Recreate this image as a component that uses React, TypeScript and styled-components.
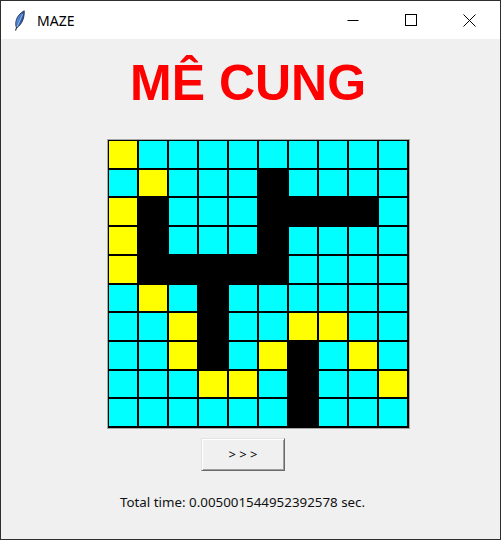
import React from "react";
import styled, { createGlobalStyle } from "styled-components";

const GlobalStyle = createGlobalStyle`
  html, body { margin: 0; padding: 0; background: #f0f0f0; }
  * { box-sizing: border-box; }
`;

const Window = styled.div`
  width: 501px;
  height: 540px;
  border: 1px solid #2e2e2e;
  background: #f0f0f0;
  display: flex;
  flex-direction: column;
  overflow: hidden;
`;

const TitleBar = styled.div`
  height: 38px;
  flex: 0 0 38px;
  background: #ffffff;
  display: flex;
  align-items: center;
`;

const AppIcon = styled.svg`
  width: 11px;
  height: 21px;
  margin-left: 13px;
  flex: 0 0 auto;
`;

const TitleText = styled.span`
  margin-left: 12px;
  font-family: "Noto Sans", "Segoe UI", sans-serif;
  font-size: 14px;
  color: #000;
  flex: 1;
`;

const Controls = styled.div`
  display: flex;
  height: 100%;
  margin-right: 2px;
`;

const ControlButton = styled.div`
  width: 58px;
  height: 100%;
  display: flex;
  align-items: center;
  justify-content: center;
`;

const Content = styled.div`
  flex: 1;
  display: flex;
  flex-direction: column;
  align-items: flex-start;
`;

const Heading = styled.h1`
  margin: 20px 0 0 129px;
  font-family: "Liberation Sans", Arial, sans-serif;
  font-weight: bold;
  font-size: 50px;
  line-height: 49px;
  color: #ff0000;
  white-space: nowrap;
`;

const MazeFrame = styled.div`
  margin: 31px 0 0 106px;
  width: 303px;
  height: 290px;
  border: 1px solid #a8a8a8;
  background: #000;
  padding: 1px 2px 2px 1px;
  display: grid;
  grid-template-columns: repeat(10, 28px);
  grid-template-rows: repeat(10, 1fr);
  gap: 2px;
`;

const Cell = styled.div<{ $kind: string }>`
  background: ${(p) =>
    p.$kind === "Y" ? "#ffff00" : p.$kind === "B" ? "#000000" : "#00ffff"};
`;

const StepButton = styled.button`
  margin: 9px 0 0 200px;
  width: 84px;
  height: 33px;
  padding: 0 0 2px 0;
  background: #f0f0f0;
  border: 1px solid;
  border-color: #e3e3e3 #696969 #696969 #e3e3e3;
  box-shadow: inset 1px 1px #ffffff, inset -1px -1px #a0a0a0;
  font-family: "Noto Sans", "Segoe UI", sans-serif;
  font-size: 13px;
  color: #000;
  white-space: pre;
`;

const TimeLabel = styled.div`
  margin: 23px 0 0 119px;
  font-family: "Noto Sans", "Segoe UI", sans-serif;
  font-size: 13.35px;
  line-height: 16px;
  color: #111;
  white-space: nowrap;
`;

const MAZE = [
  "YCCCCCCCCC",
  "CYCCCBCCCC",
  "YBCCCBBBBC",
  "YBCCCBCCCC",
  "YBBBBBCCCC",
  "CYCBCCCCCC",
  "CCYBCCYYCC",
  "CCYBCYBCYC",
  "CCCYYCBCCY",
  "CCCCCCBCCC",
];

export default function App() {
  return (
    <>
      <GlobalStyle />
      <Window>
        <TitleBar>
          <AppIcon viewBox="0 0 11 21">
            <defs>
              <linearGradient id="fg" x1="0" y1="0" x2="1" y2="0.6">
                <stop offset="0" stopColor="#a9c8f2" />
                <stop offset="0.45" stopColor="#4a82d2" />
                <stop offset="1" stopColor="#1a3f86" />
              </linearGradient>
            </defs>
            <path
              d="M2.6 18 C0.4 13 2.2 5.2 10.2 0.8 C10.6 7 8.4 14 2.6 18 Z"
              fill="url(#fg)"
              stroke="#1b2b4d"
              strokeWidth="0.9"
            />
            <path d="M3 17 L8.6 4" stroke="#dbe8fa" strokeWidth="0.6" />
            <path d="M2.6 17.6 L1.5 20.6" stroke="#2a2a2a" strokeWidth="1.1" />
          </AppIcon>
          <TitleText>MAZE</TitleText>
          <Controls>
            <ControlButton>
              <svg width="12" height="12" viewBox="0 0 12 12">
                <path d="M0.5 6.5 H11.5" stroke="#000" strokeWidth="1" />
              </svg>
            </ControlButton>
            <ControlButton>
              <svg width="12" height="12" viewBox="0 0 12 12">
                <rect x="0.5" y="0.5" width="11" height="11" fill="none" stroke="#000" strokeWidth="1" />
              </svg>
            </ControlButton>
            <ControlButton>
              <svg width="13" height="13" viewBox="0 0 13 13">
                <path d="M0.5 0.5 L12.5 12.5 M12.5 0.5 L0.5 12.5" stroke="#000" strokeWidth="1" />
              </svg>
            </ControlButton>
          </Controls>
        </TitleBar>
        <Content>
          <Heading>MÊ CUNG</Heading>
          <MazeFrame>
            {MAZE.flatMap((row, r) =>
              row.split("").map((k, c) => <Cell key={`${r}-${c}`} $kind={k} />)
            )}
          </MazeFrame>
          <StepButton>{"> > >"}</StepButton>
          <TimeLabel>Total time: 0.005001544952392578 sec.</TimeLabel>
        </Content>
      </Window>
    </>
  );
}
